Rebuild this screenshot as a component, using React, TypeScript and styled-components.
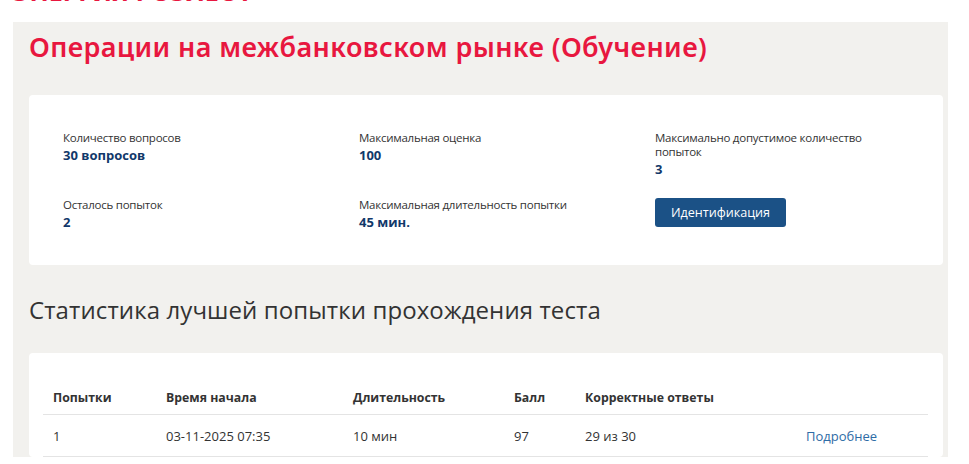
import React from "react";
import styled, { createGlobalStyle } from "styled-components";

const Global = createGlobalStyle`
  html, body { margin: 0; padding: 0; background: #ffffff; }
  body { font-family: "Open Sans", "Noto Sans", sans-serif; color: #333; }
  * { box-sizing: border-box; }
`;

const Page = styled.div`
  width: 969px;
  height: 464px;
  overflow: hidden;
  background: #fff;
`;

const TopBar = styled.div`
  height: 22px;
  overflow: hidden;
  padding-left: 13px;
`;

const TopHeading = styled.div`
  margin-top: -19px;
  font-family: "Noto Sans", sans-serif;
  font-weight: 700;
  font-size: 25px;
  line-height: 20px;
  color: #e8173f;
  white-space: nowrap;
  text-transform: uppercase;
`;

const Panel = styled.div`
  margin-left: 13px;
  width: 935px;
  background: #f2f1ee;
  padding: 7px 5px 0 16px;
  display: flex;
  flex-direction: column;
`;

const Title = styled.h1`
  margin: 0;
  font-family: "Noto Sans", sans-serif;
  font-weight: 600;
  font-size: 27px;
  line-height: 36px;
  color: #e8173f;
  letter-spacing: 0.4px;
`;

const Card = styled.div<{ $pad: string; $top?: number }>`
  background: #fff;
  border-radius: 4px;
  padding: ${(p) => p.$pad};
  margin-top: ${(p) => p.$top ?? 0}px;
`;

const InfoGrid = styled.div`
  display: grid;
  grid-template-columns: 296px 296px 250px;
  row-gap: 20px;
`;

const Field = styled.div`
  display: flex;
  flex-direction: column;
`;

const Label = styled.div`
  font-size: 11.5px;
  line-height: 14px;
  letter-spacing: -0.25px;
  color: #333;
`;

const Value = styled.div`
  margin-top: 2px;
  font-size: 13px;
  line-height: 17px;
  font-weight: 700;
  color: #11386a;
`;

const Button = styled.button`
  align-self: flex-start;
  width: 131px;
  height: 29px;
  border: none;
  border-radius: 3px;
  background: #1b5186;
  color: #fff;
  font-family: "Open Sans", "Noto Sans", sans-serif;
  font-size: 12.6px;
  cursor: pointer;
`;

const SectionTitle = styled.h2`
  margin: 29px 0 27px 0;
  font-family: "Open Sans", sans-serif;
  font-weight: 400;
  font-size: 24px;
  line-height: 32px;
  letter-spacing: 0.1px;
  color: #333;
`;

const Table = styled.table`
  width: 100%;
  border-collapse: collapse;
  font-size: 13px;
`;

const Th = styled.th<{ $w?: number }>`
  text-align: left;
  font-weight: 700;
  font-size: 12.3px;
  color: #333;
  padding: 0 10px 6px 10px;
  height: 26px;
  border-bottom: 1px solid #e4e4e4;
  width: ${(p) => (p.$w ? `${p.$w}px` : "auto")};
`;

const Td = styled.td`
  padding: 12px 10px 11px 10px;
  color: #333;
  border-bottom: 1px solid #e4e4e4;
`;

const Link = styled.a`
  color: #2e6ca6;
  text-decoration: none;
`;

export default function App() {
  return (
    <Page>
      <Global />
      <TopBar>
        <TopHeading>Энергия Роэлеот</TopHeading>
      </TopBar>
      <Panel>
        <Title>Операции на межбанковском рынке (Обучение)</Title>
        <Card $pad="36px 0 34px 34px" $top={30}>
          <InfoGrid>
            <Field>
              <Label>Количество вопросов</Label>
              <Value>30 вопросов</Value>
            </Field>
            <Field>
              <Label>Максимальная оценка</Label>
              <Value>100</Value>
            </Field>
            <Field>
              <Label>Максимально допустимое количество попыток</Label>
              <Value>3</Value>
            </Field>
            <Field>
              <Label>Осталось попыток</Label>
              <Value>2</Value>
            </Field>
            <Field>
              <Label>Максимальная длительность попытки</Label>
              <Value>45 мин.</Value>
            </Field>
            <Field>
              <Button>Идентификация</Button>
            </Field>
          </InfoGrid>
        </Card>
        <SectionTitle>Статистика лучшей попытки прохождения теста</SectionTitle>
        <Card $pad="35px 15px 0 14px">
          <Table>
            <thead>
              <tr>
                <Th $w={113}>Попытки</Th>
                <Th $w={187}>Время начала</Th>
                <Th $w={161}>Длительность</Th>
                <Th $w={71}>Балл</Th>
                <Th $w={221}>Корректные ответы</Th>
                <Th></Th>
              </tr>
            </thead>
            <tbody>
              <tr>
                <Td>1</Td>
                <Td>03-11-2025 07:35</Td>
                <Td>10 мин</Td>
                <Td>97</Td>
                <Td>29 из 30</Td>
                <Td>
                  <Link href="#">Подробнее</Link>
                </Td>
              </tr>
            </tbody>
          </Table>
        </Card>
      </Panel>
    </Page>
  );
}
